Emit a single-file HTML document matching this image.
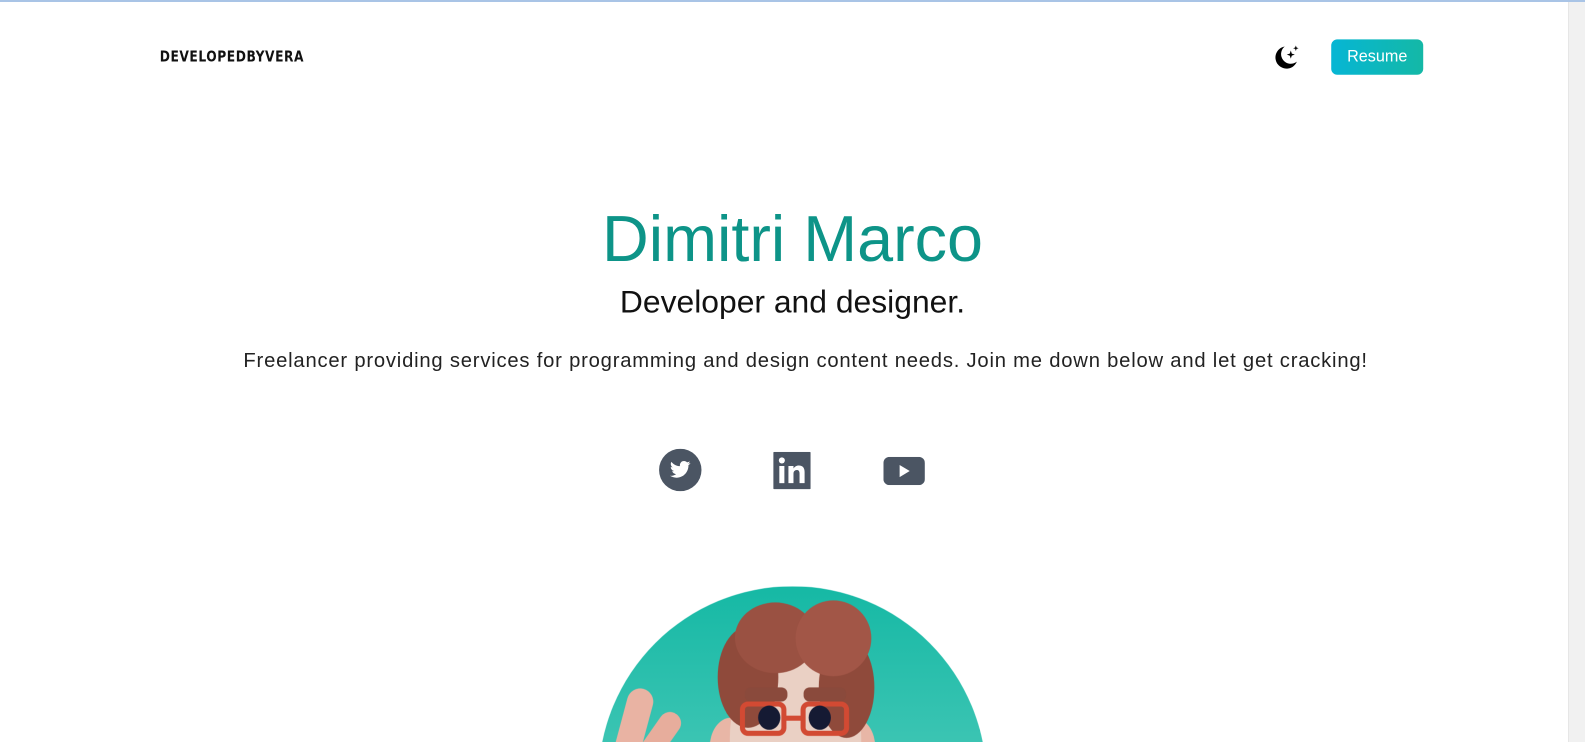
<!DOCTYPE html>
<html><head><meta charset="utf-8"><style>
*{margin:0;padding:0;box-sizing:border-box}
html,body{width:1585px;height:742px;overflow:hidden;background:#fff;font-family:"Liberation Sans",sans-serif}
#clip{position:absolute;left:0;top:0;width:1585px;height:742px;overflow:hidden}
#w{position:absolute;left:0;top:0;width:1568px;height:742px;transform:scale(1.0108);transform-origin:0 0}
.topline{position:absolute;left:0;top:0;width:1585px;height:2px;background:#a9c4e6}
.scroll{position:absolute;right:0;top:2px;width:17px;height:740px;background:#f1f1f1;border-left:1px solid #e6e6e6}
.logo{position:absolute;left:158px;top:47px;font-size:15px;font-weight:bold;letter-spacing:0.6px;color:#111;font-family:"DejaVu Sans Condensed","Liberation Sans Narrow",sans-serif;transform:scaleX(0.9);transform-origin:0 0;white-space:nowrap}
.btn{position:absolute;left:1317px;top:39px;width:91px;height:35px;border-radius:6px;background:linear-gradient(90deg,#06b6d4,#14b8a6);color:#fff;font-size:16px;text-align:center;line-height:35px}
h1{position:absolute;left:0;width:1568px;top:199px;text-align:center;font-weight:normal;font-size:64px;color:#0d9488;white-space:nowrap}
h2{position:absolute;left:0;width:1568px;top:280px;text-align:center;font-weight:normal;font-size:31.5px;color:#111;white-space:nowrap}
p{position:absolute;left:13px;width:1568px;top:346px;text-align:center;font-size:20px;letter-spacing:0.78px;color:#222;white-space:nowrap}
.circle{position:absolute;left:592px;top:580px;width:384px;height:384px;border-radius:50%;background:linear-gradient(180deg,#16b9a5,#73d6c8);overflow:hidden}
</style></head><body>
<div id="clip">
<div class="topline"></div><div class="scroll"></div>
<div id="w">
<div class="logo">DEVELOPEDBYVERA</div>
<svg style="position:absolute;left:1260px;top:44px" width="28" height="26" viewBox="0 0 28 26"><path d="M11 2 A11 11 0 1 0 23 17 A9 9 0 0 1 11 2Z" fill="#000"/><path d="M17 6 l1 3 3 1 -3 1 -1 3 -1 -3 -3 -1 3 -1Z M22 1 l.7 2 2 .7 -2 .7 -.7 2 -.7 -2 -2 -.7 2 -.7Z" fill="#000"/></svg>
<div class="btn">Resume</div>
<h1>Dimitri Marco</h1>
<h2>Developer and designer.</h2>
<p>Freelancer providing services for programming and design content needs. Join me down below and let get cracking!</p>
<svg style="position:absolute;left:652px;top:444px" width="42" height="42" viewBox="0 0 42 42"><circle cx="21" cy="21" r="21" fill="#4b5563"/><path d="M31 14c-.8.4-1.6.6-2.4.7.9-.5 1.5-1.3 1.8-2.3-.8.5-1.7.8-2.7 1-1.6-1.7-4.3-1.7-5.9-.1-1 1-1.4 2.5-1.1 3.9-3.3-.2-6.4-1.7-8.5-4.3-1.1 1.9-.5 4.3 1.3 5.5-.7 0-1.3-.2-1.9-.5 0 2 1.4 3.7 3.3 4.1-.6.2-1.3.2-1.9.1.5 1.7 2.1 2.8 3.9 2.9-1.7 1.3-3.9 2-6.1 1.7 1.9 1.2 4.1 1.9 6.4 1.9 7.7 0 11.9-6.4 11.9-11.9v-.5c.8-.6 1.5-1.3 2-2.2z" fill="#fff"/></svg>
<svg style="position:absolute;left:765px;top:447px" width="37" height="37" viewBox="0 0 37 37"><rect width="37" height="37" rx="1" fill="#4b5563"/><rect x="6" y="14" width="5" height="17" fill="#fff"/><circle cx="8.5" cy="8.5" r="3" fill="#fff"/><path d="M15 14h5v2.5c1-1.7 2.8-3 5.3-3 4 0 5.7 2.5 5.7 6.5V31h-5v-9.5c0-2.2-.8-3.5-2.7-3.5-2 0-3.3 1.4-3.3 3.7V31h-5z" fill="#fff"/></svg>
<svg style="position:absolute;left:874px;top:452px" width="41" height="28" viewBox="0 0 41 28"><rect width="41" height="28" rx="6" fill="#4b5563"/><path d="M16 8v12l10-6z" fill="#fff"/></svg>
<div class="circle">
 <div style="position:absolute;left:20px;top:100px;width:26px;height:90px;background:#e9b3a3;border-radius:13px;transform:rotate(15deg)"></div>
 <div style="position:absolute;left:46px;top:120px;width:22px;height:70px;background:#e7ad9c;border-radius:11px;transform:rotate(35deg)"></div>
 <div style="position:absolute;left:110px;top:130px;width:42px;height:60px;background:#e8b6a6;border-radius:50%"></div>
 <div style="position:absolute;left:232px;top:130px;width:42px;height:60px;background:#e8b6a6;border-radius:50%"></div>
 <div style="position:absolute;left:130px;top:60px;width:130px;height:200px;background:#ead0c4;border-radius:45%"></div>
 <div style="position:absolute;left:118px;top:40px;width:60px;height:100px;background:#8f4a3b;border-radius:50%"></div>
 <div style="position:absolute;left:218px;top:50px;width:55px;height:100px;background:#8f4a3b;border-radius:50%"></div>
 <div style="position:absolute;left:135px;top:16px;width:80px;height:70px;background:#9a5142;border-radius:50%"></div>
 <div style="position:absolute;left:195px;top:14px;width:75px;height:75px;background:#a25647;border-radius:50%"></div>
 <div style="position:absolute;left:145px;top:100px;width:42px;height:14px;background:#8a4a3c;border-radius:6px"></div>
 <div style="position:absolute;left:203px;top:100px;width:42px;height:14px;background:#8a4a3c;border-radius:6px"></div>
 <div style="position:absolute;left:140px;top:114px;width:46px;height:34px;border:5px solid #d24a33;border-radius:8px"></div>
 <div style="position:absolute;left:200px;top:114px;width:48px;height:34px;border:5px solid #d24a33;border-radius:8px"></div>
 <div style="position:absolute;left:184px;top:128px;width:18px;height:5px;background:#d24a33"></div>
 <div style="position:absolute;left:158px;top:118px;width:22px;height:24px;background:#151a33;border-radius:50%"></div>
 <div style="position:absolute;left:208px;top:118px;width:22px;height:24px;background:#151a33;border-radius:50%"></div>
</div>
</div>
</div>
</body></html>
